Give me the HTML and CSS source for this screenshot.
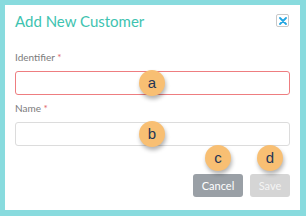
FILE: index.html
```html
<!DOCTYPE html>
<html lang="en">
<head>
    <meta charset="UTF-8">
    <title>Add New Customer</title>
    <link rel="stylesheet" href="styles.css">
</head>
<body>
    <div class="dialog">
        <div class="header">
            <h1>Add New Customer</h1>
            <button class="close" aria-label="Close">
                <svg width="8" height="8" viewBox="0 0 8 8"><path d="M1 1L7 7M7 1L1 7" stroke="#23a6e2" stroke-width="1.8" stroke-linecap="round"/></svg>
            </button>
        </div>

        <div class="field">
            <label>Identifier <span class="req">*</span></label>
            <div class="input-wrap">
                <input type="text" class="invalid">
                <span class="badge">a</span>
            </div>
        </div>

        <div class="field">
            <label>Name <span class="req">*</span></label>
            <div class="input-wrap">
                <input type="text">
                <span class="badge">b</span>
            </div>
        </div>

        <div class="actions">
            <div class="btn-wrap">
                <button class="btn cancel">Cancel</button>
                <span class="badge">c</span>
            </div>
            <div class="btn-wrap">
                <button class="btn save" disabled>Save</button>
                <span class="badge">d</span>
            </div>
        </div>
    </div>
</body>
</html>
```

FILE: styles.css
```css
* { margin: 0; padding: 0; box-sizing: border-box; }
body { background: #88dbde; font-family: Lato, "Open Sans", sans-serif; width: 306px; height: 216px; padding: 5px 6px 6px 5px; }
.dialog { background: #fff; width: 295px; height: 205px; padding: 9px 10px 0 10px; }
.header { display: flex; justify-content: space-between; align-items: flex-start; height: 37px; }
h1 { font-size: 15px; font-weight: 400; color: #3ec3b0; line-height: 20px; margin-top: -3px; }
.close { width: 13px; height: 13px; margin-right: 1px; background: #fff; border: 1px solid #c9c9c9; border-radius: 2px; display: flex; align-items: center; justify-content: center; }
.field { margin-bottom: 7px; }
label { display: block; font-size: 10px; color: #7b7b7b; line-height: 13px; margin-bottom: 7px; }
.req { color: #e06469; }
.input-wrap { position: relative; }
input { display: block; width: 275px; height: 24px; border: 1px solid #dcdcdc; border-radius: 3px; background: #fff; }
input.invalid { border-color: #ee7d80; }
.badge { position: absolute; width: 26px; height: 26px; border-radius: 50%; background: #f8bf73; color: #243556; font-family: "Liberation Sans", Arial, sans-serif; font-size: 15px; line-height: 25px; text-align: center; box-shadow: 1px 3px 4px rgba(0,0,0,0.3); }
.input-wrap .badge { left: 124px; top: -1px; }
.actions { display: flex; justify-content: flex-end; gap: 7px; padding-top: 21px; }
.btn-wrap { position: relative; }
.btn { display: block; height: 23px; border: none; border-radius: 3px; color: #fff; font-family: Lato, sans-serif; font-size: 11px; }
.cancel { width: 50px; background: #9aa0a6; }
.save { width: 40px; background: #d5d5d5; color: #f4f4f4; }
.btn-wrap .badge { top: -29px; left: 50%; margin-left: -13px; }
```
